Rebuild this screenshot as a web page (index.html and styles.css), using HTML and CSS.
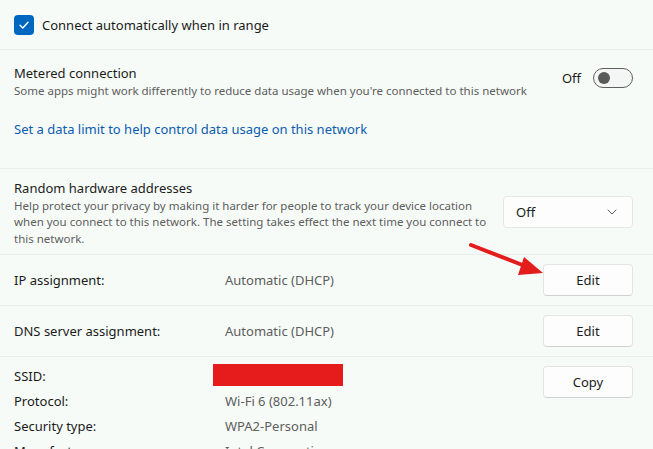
FILE: index.html
```html
<!DOCTYPE html>
<html>
<head>
<meta charset="utf-8">
<link rel="stylesheet" href="styles.css">
</head>
<body>
<div class="page">
  <div class="row row-check">
    <span class="checkbox">
      <svg width="12" height="12" viewBox="0 0 12 12"><path d="M2 6.3 L4.8 9 L10 3.2" fill="none" stroke="#fff" stroke-width="1.4" stroke-linecap="round" stroke-linejoin="round"/></svg>
    </span>
    <span class="label">Connect automatically when in range</span>
  </div>

  <div class="section metered">
    <div class="setting">
      <div class="texts">
        <div class="title">Metered connection</div>
        <div class="desc">Some apps might work differently to reduce data usage when you're connected to this network</div>
      </div>
      <div class="toggle-wrap">
        <span class="toggle-label">Off</span>
        <span class="toggle"><span class="knob"></span></span>
      </div>
    </div>
    <a class="link">Set a data limit to help control data usage on this network</a>
  </div>

  <div class="section random">
    <div class="texts narrow">
      <div class="title">Random hardware addresses</div>
      <div class="desc">Help protect your privacy by making it harder for people to track your device location when you connect to this network. The setting takes effect the next time you connect to this network.</div>
    </div>
    <div class="dropdown">
      <span>Off</span>
      <svg width="10" height="6" viewBox="0 0 10 6"><path d="M1 1 L5 5 L9 1" fill="none" stroke="#5c5c5c" stroke-width="1" stroke-linecap="round" stroke-linejoin="round"/></svg>
    </div>
  </div>

  <div class="row kv">
    <span class="key">IP assignment:</span>
    <span class="val">Automatic (DHCP)</span>
    <button class="btn">Edit</button>
  </div>

  <div class="row kv">
    <span class="key">DNS server assignment:</span>
    <span class="val">Automatic (DHCP)</span>
    <button class="btn">Edit</button>
  </div>

  <div class="info">
    <div class="props">
      <span class="key">SSID:</span><span class="val"><span class="redact"></span></span>
      <span class="key">Protocol:</span><span class="val">Wi-Fi 6 (802.11ax)</span>
      <span class="key">Security type:</span><span class="val">WPA2-Personal</span>
      <span class="key">Manufacturer:</span><span class="val">Intel Corporation</span>
    </div>
    <button class="btn copy">Copy</button>
  </div>

  <svg class="arrow" width="80" height="40" viewBox="0 0 80 40">
    <line x1="4" y1="8" x2="58" y2="29" stroke="#e31c1c" stroke-width="4" stroke-linecap="round"/>
    <polygon points="76,36 57,20 51,38" fill="#e31c1c"/>
  </svg>
</div>
</body>
</html>
```

FILE: styles.css
```css
* { box-sizing: border-box; }
html, body { margin: 0; padding: 0; }
body {
  background: #f7fbf8;
  font-family: "Noto Sans", "Open Sans", sans-serif;
  color: #1b1b1b;
  width: 653px;
  height: 449px;
  overflow: hidden;
}
.page { position: relative; }
.row-check {
  height: 50px;
  display: flex;
  align-items: center;
  padding: 0 14px;
  border-bottom: 1px solid #e6f0e9;
}
.checkbox {
  width: 20px; height: 20px;
  background: #0067c0;
  border-radius: 4px;
  display: flex; align-items: center; justify-content: center;
  margin-right: 8px;
}
.label { font-size: 13px; }
.section { border-bottom: 1px solid #e6f0e9; padding: 0 20px 0 14px; }
.metered { height: 119px; padding-top: 13px; }
.setting { display: flex; justify-content: space-between; align-items: center; }
.title { font-size: 13px; line-height: 20px; }
.desc { font-size: 11.5px; line-height: 16.5px; color: #5d5d5d; }
.toggle-wrap { display: flex; align-items: center; gap: 12px; margin-top: -6px; }
.toggle-label { font-size: 13px; }
.toggle {
  width: 40px; height: 20px;
  border: 1px solid #5f5f5f;
  border-radius: 10px;
  background: #f3f6f4;
  display: flex; align-items: center;
  padding-left: 4px;
}
.knob { width: 12px; height: 12px; border-radius: 50%; background: #5a5a5a; }
.link {
  display: block;
  margin-top: 20px;
  font-size: 13px;
  color: #0a5bb0;
}
.random {
  height: 86px;
  display: flex;
  justify-content: space-between;
  align-items: center;
  padding-top: 2px;
}
.narrow { width: 475px; }
.dropdown {
  width: 130px; height: 32px;
  background: #fcfdfc;
  border: 1px solid #e4e8e5;
  border-radius: 4px;
  display: flex; align-items: center; justify-content: space-between;
  padding: 0 15px 0 12px;
  font-size: 13px;
  margin-top: -2px;
}
.kv {
  height: 51px;
  display: flex;
  align-items: center;
  padding: 0 20px 0 14px;
  border-bottom: 1px solid #e6f0e9;
  font-size: 13px;
}
.kv .key { width: 211px; }
.kv .val { flex: 1; color: #5d5d5d; }
.btn {
  width: 90px; height: 32px;
  background: #fdfdfd;
  border: 1px solid #e3e5e4;
  border-bottom-color: #d0d2d1;
  border-radius: 4px;
  font-family: inherit;
  font-size: 13px;
  color: #1b1b1b;
  padding: 0;
}
.info {
  display: flex;
  justify-content: space-between;
  align-items: flex-start;
  padding: 9px 20px 0 14px;
  font-size: 13px;
}
.props {
  display: grid;
  grid-template-columns: 211px auto;
  grid-auto-rows: 25px;
  align-items: center;
  margin-top: -3px;
}
.props .val { color: #5d5d5d; }
.redact { display: block; width: 130px; height: 22px; background: #e61c1c; margin-left: -12px; margin-top: -2px; }
.arrow { position: absolute; left: 467px; top: 237px; }
```
